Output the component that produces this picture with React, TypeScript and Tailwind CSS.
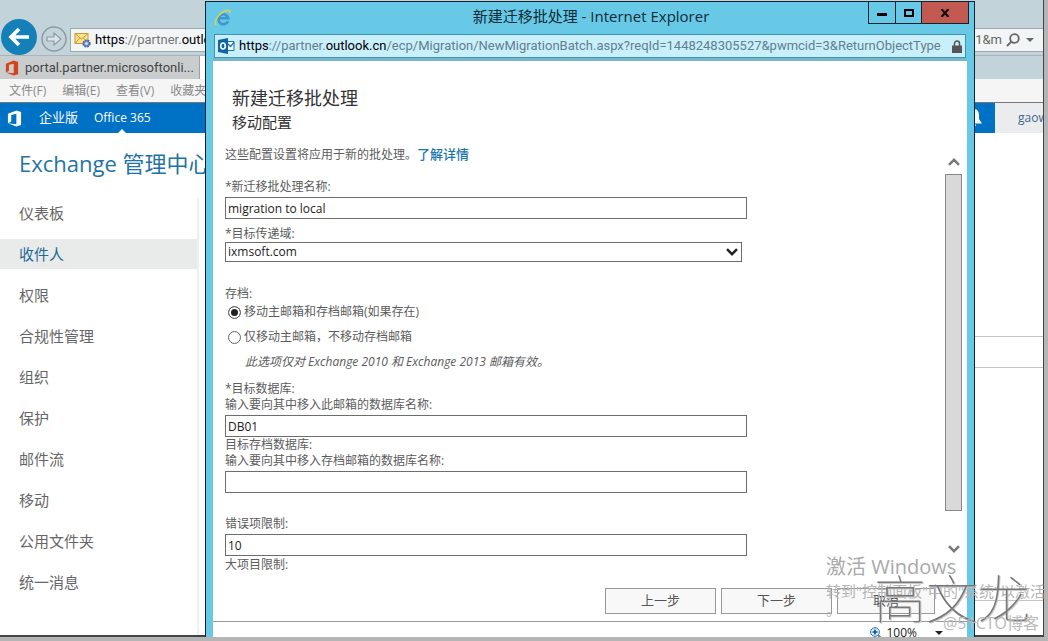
import React, { useState } from "react";
import { Lock } from "lucide-react";

const navItems = [
  "仪表板",
  "收件人",
  "权限",
  "合规性管理",
  "组织",
  "保护",
  "邮件流",
  "移动",
  "公用文件夹",
  "统一消息",
];

function OfficeLogo({ className }: { className: string }) {
  return (
    <svg viewBox="0 0 16 18" className={className} fill="currentColor" aria-hidden="true">
      <path
        fillRule="evenodd"
        d="M1 4 10 0.5 15 2v14l-5 1.5L1 14l9 1V4L4.5 5.3v7L1 14Z"
      />
    </svg>
  );
}

function MailSiteIcon() {
  return (
    <svg viewBox="0 0 17 16" className="h-4 w-[17px] shrink-0" aria-hidden="true">
      <rect x="1" y="1.5" width="13" height="10" fill="#fbe38a" stroke="#c39a35" />
      <path d="m1.500 2 6 5 6-5M1.500 11l4-5M13.500 11l-4-5" fill="none" stroke="#c39a35" />
      <circle cx="12.500" cy="11.500" r="3.200" fill="#7f9bd0" stroke="#4262a8" strokeWidth="1.800" strokeDasharray="1.800 .8" />
      <circle cx="12.500" cy="11.500" r="1.200" fill="#dfe8f8" />
    </svg>
  );
}

function OutlookIcon() {
  return (
    <svg viewBox="0 0 17 16" className="h-4 w-[17px] shrink-0" aria-hidden="true">
      <path d="M9 3.500h7v9H9" fill="#f4fbff" stroke="#1b6fae" />
      <path d="m9 5 3.500 3.500L16 4.500" fill="none" stroke="#1b6fae" strokeWidth="1.200" />
      <path d="M0 2 10 0v16L0 14Z" fill="#0f64a5" />
      <ellipse cx="5" cy="8" rx="2.300" ry="3" fill="none" stroke="#fff" strokeWidth="1.600" />
    </svg>
  );
}

function ExplorerIcon() {
  return (
    <svg viewBox="0 0 18 18" className="h-[18px] w-[18px]" aria-hidden="true">
      <path
        d="M14 12.200A5 5 0 1 1 14.300 9.300H5.500"
        fill="none"
        stroke="#3f97cc"
        strokeWidth="2.600"
      />
      <path
        d="M2.500 15.800C-.5 14 3 6.500 9 3c4-2.300 7.500-2.500 7 1"
        fill="none"
        stroke="#e3cf57"
        strokeWidth="1.600"
      />
    </svg>
  );
}

function Chevron({ className }: { className: string }) {
  return (
    <svg viewBox="0 0 12 8" className={className} fill="none" stroke="currentColor" strokeWidth="2.400" aria-hidden="true">
      <path d="m1 1.200 5 5 5-5" />
    </svg>
  );
}

function BrowserChrome() {
  return (
    <header>
      <div className="flex h-[55px] items-end bg-[#c2d4da] pb-[3px]">
        <button aria-label="后退" className="-mb-[3px] ml-px h-[36px] w-[36px] shrink-0">
          <svg viewBox="0 0 36 36" className="h-full w-full">
            <circle cx="18" cy="18" r="18" fill="#1580b8" />
            <path d="M28 18H10m8-8-8 8 8 8" fill="none" stroke="#fff" strokeWidth="3.600" />
          </svg>
        </button>
        <button aria-label="前进" className="ml-1 h-[26px] w-[26px] shrink-0">
          <svg viewBox="0 0 26 26" className="h-full w-full" fill="none" stroke="#8d9ba1">
            <circle cx="13" cy="13" r="12" strokeWidth="1.500" />
            <path d="M6 11h7V7l7 6-7 6v-4H6Z" fill="#dbe5e9" strokeWidth="1.200" />
          </svg>
        </button>
        <div className="ml-[3px] flex h-6 min-w-0 flex-1 items-center border border-r-0 border-[#9ba9af] bg-[#f1f5f6] pl-[3px] font-[Roboto]">
          <MailSiteIcon />
          <span className="ml-1 min-w-0 flex-1 truncate text-[13px] text-[#777]">
            <span className="text-black">https</span>://partner.<span className="text-black">outlook.cn</span>/ecp/
          </span>
          <span className="text-[13px] text-[#666]">=1&amp;m</span>
          <button aria-label="搜索" className="ml-1 flex shrink-0 items-center gap-1.5 pr-[9px]">
            <svg viewBox="0 0 14 14" className="h-[14px] w-[14px]" fill="none" stroke="#666" strokeWidth="1.800">
              <circle cx="8.500" cy="5.500" r="4.300" />
              <path d="M5.500 8.500 1 13" />
            </svg>
            <svg viewBox="0 0 8 4" className="h-1 w-2" fill="#666">
              <path d="M0 0h8L4 4Z" />
            </svg>
          </button>
        </div>
      </div>
      <div className="flex h-6 border-t border-[#a9b5ba] bg-[#c2d4da]">
        <button className="flex w-[200px] items-center gap-[6px] border-r border-[#9aa5aa] bg-[#cacdce] pl-[5px] text-[13px] text-[#444]">
          <OfficeLogo className="h-4 w-[14px] shrink-0 text-[#d5421c]" />
          <span className="whitespace-nowrap font-[Roboto]">portal.partner.microsoftonli...</span>
        </button>
        <div className="w-10 bg-white" />
      </div>
      <nav className="flex h-6 items-center gap-4 border-b border-[#777] bg-[#f5f5f5] pl-[9px] text-xs text-[#8a8a8a]">
        <button>文件(F)</button>
        <button>编辑(E)</button>
        <button>查看(V)</button>
        <button>收藏夹(A)</button>
      </nav>
    </header>
  );
}

function SuiteBar() {
  return (
    <div className="flex h-[30px] bg-[#0072c6] text-[13px] text-white">
      <div className="flex flex-1 items-center">
        <OfficeLogo className="ml-[7px] h-[17px] w-[15px]" />
        <a href="#enterprise" className="ml-[17px]">企业版</a>
        <a href="#office" className="relative ml-4 text-xs leading-[30px]">
          Office 365
          <svg viewBox="0 0 8 4" className="absolute bottom-0 left-1/2 h-1 w-2 -translate-x-1/2" fill="#fff">
            <path d="M0 4 4 0l4 4Z" />
          </svg>
        </a>
        <svg viewBox="0 0 18 18" className="ml-auto mr-3 h-[18px] w-[18px]" fill="#fff" aria-hidden="true">
          <path d="M9 0c3.500 0 5 3 5 6v4l3 4.500H1L4 10V6c0-3 1.500-6 5-6Zm-2 15.500h4a2 2 0 0 1-4 0Z" />
        </svg>
      </div>
      <a href="#user" className="w-12 overflow-hidden bg-[#ebecee] pl-[23px] text-xs leading-[30px] text-[#3c6a8e]">
        gaow
      </a>
    </div>
  );
}

function AdminPage() {
  return (
    <div className="flex flex-1 flex-col bg-white">
      <SuiteBar />
      <a href="#eac" className="pl-[19px] pt-3 text-[22px] leading-9 text-[#1f74a3]">Exchange 管理中心</a>
      <div className="mt-[17px] flex flex-1">
        <nav className="flex w-[199px] shrink-0 flex-col gap-[11px] border-r-2 border-[#efefef]">
          {navItems.map((item) => (
            <a
              key={item}
              href={"#" + item}
              className={
                item === "收件人"
                  ? "bg-[#e9eaea] pl-[19px] text-[15px] leading-[30px] text-[#1f6b98]"
                  : "pl-[19px] text-[15px] leading-[30px] text-[#666]"
              }
            >
              {item}
            </a>
          ))}
        </nav>
        <main className="ml-4 flex-1 pt-[138px]">
          <div className="h-8 border-y border-[#c4c4c4]" />
          <div className="h-[233px] border-b border-[#c4c4c4]" />
        </main>
      </div>
    </div>
  );
}

const fieldClass =
  "block h-[22px] w-[522px] max-w-full border border-[#6d6d6d] bg-white px-[2px] text-xs text-[#222] outline-none";

function MigrationForm() {
  const [archive, setArchive] = useState("both");
  return (
    <form id="migration" className="flex-1 pl-3 text-xs leading-4 text-[#5c5c5c]">
      <p className="leading-5">
        这些配置设置将应用于新的批处理。
        <a href="#learn" className="text-[13px] font-medium text-[#1a76ad]">了解详情</a>
      </p>
      <label htmlFor="name" className="mb-[2px] mt-[14px] block">*新迁移批处理名称:</label>
      <input id="name" className={fieldClass} defaultValue="migration to local" />
      <label htmlFor="domain" className="mt-[7px] block">*目标传递域:</label>
      <div className="relative w-[517px] max-w-full">
        <select
          id="domain"
          className="block h-5 w-full appearance-none border border-[#6d6d6d] bg-white px-[2px] text-xs leading-4 text-[#222]"
        >
          <option>ixmsoft.com</option>
        </select>
        <Chevron className="pointer-events-none absolute right-1 top-1.5 h-2 w-3 text-[#222]" />
      </div>
      <fieldset className="mt-6">
        <legend>存档:</legend>
        <label className="flex h-5 items-center gap-[3px] pl-[3px]">
          <input
            type="radio"
            name="archive"
            checked={archive === "both"}
            onChange={() => setArchive("both")}
            className="h-[13px] w-[13px] appearance-none rounded-full border border-[#666] bg-white checked:bg-[#222] checked:shadow-[inset_0_0_0_2px_white]"
          />
          移动主邮箱和存档邮箱(如果存在)
        </label>
        <label className="mt-[5px] flex h-5 items-center gap-[3px] pl-[3px]">
          <input
            type="radio"
            name="archive"
            checked={archive === "primary"}
            onChange={() => setArchive("primary")}
            className="h-[13px] w-[13px] appearance-none rounded-full border border-[#666] bg-white checked:bg-[#222] checked:shadow-[inset_0_0_0_2px_white]"
          />
          仅移动主邮箱，不移动存档邮箱
        </label>
        <p className="mt-[7px] pl-5 italic">此选项仅对 Exchange 2010 和 Exchange 2013 邮箱有效。</p>
      </fieldset>
      <label htmlFor="db" className="mb-[2px] mt-[11px] block">
        *目标数据库:
        <br />
        输入要向其中移入此邮箱的数据库名称:
      </label>
      <input id="db" className={fieldClass} defaultValue="DB01" />
      <label htmlFor="archive-db" className="mb-[2px] block">
        目标存档数据库:
        <br />
        输入要向其中移入存档邮箱的数据库名称:
      </label>
      <input id="archive-db" className={fieldClass} />
      <label htmlFor="bad" className="mb-[2px] mt-[23px] block">错误项限制:</label>
      <input id="bad" className={fieldClass} defaultValue="10" />
      <p className="pt-px">大项目限制:</p>
    </form>
  );
}

function Dialog() {
  return (
    <section className="absolute bottom-1 left-[205px] right-[73px] top-px flex flex-col overflow-hidden border border-b-0 border-[#123] bg-[#67c9e6]">
      <header className="relative flex h-8 shrink-0 items-center pl-2">
        <ExplorerIcon />
        <h2 className="flex-1 pb-1 pr-6 text-center text-[15px] leading-6 text-[#0f2c38]">
          新建迁移批处理 - Internet Explorer
        </h2>
        <div className="absolute -top-px right-[5px] flex h-[23px] divide-x divide-[#123] border border-[#123]">
          <button aria-label="最小化" className="flex w-[27px] items-center justify-center">
            <span className="mt-1 h-[3px] w-[10px] bg-black" />
          </button>
          <button aria-label="最大化" className="flex w-[26px] items-center justify-center">
            <span className="h-2 w-[10px] border-2 border-black" />
          </button>
          <button aria-label="关闭" className="flex w-[46px] items-center justify-center bg-[#c35a52]">
            <svg viewBox="0 0 10 8" className="h-2 w-[10px]" stroke="#111" strokeWidth="2.200">
              <path d="m1.500 0 7 8M8.500 0l-7 8" />
            </svg>
          </button>
        </div>
      </header>
      <div className="mx-2 flex h-6 shrink-0 items-center border border-[#3f93b4] bg-[#c9effb] pl-[3px] pr-[2px]">
        <OutlookIcon />
        <span className="ml-1 min-w-0 flex-1 overflow-hidden whitespace-nowrap font-[Roboto] text-[13px] text-[#5f808c]">
          <span className="text-black">https</span>://partner.<span className="text-black">outlook.cn</span>
          /ecp/Migration/NewMigrationBatch.aspx?reqId=1448248305527&amp;pwmcid=3&amp;ReturnObjectType
        </span>
        <svg viewBox="0 0 10 13" className="ml-1.5 mr-px h-[13px] w-[10px] shrink-0" aria-hidden="true">
          <path d="M2.500 6V3.500a2.500 2.500 0 0 1 5 0V6" fill="none" stroke="#555" strokeWidth="1.500" />
          <path d="M0 5.500h10V13H0Z" fill="#555" />
        </svg>
      </div>
      <div className="mx-[7px] flex min-h-0 flex-1 flex-col border-t-[3px] border-[#79b6ca] bg-white">
        <div className="mb-[9px] pl-[19px] pt-[25px] text-[#333]">
          <h1 className="text-lg leading-6">新建迁移批处理</h1>
          <h2 className="text-[15px] leading-[25px]">移动配置</h2>
        </div>
        <div className="flex">
          <MigrationForm />
          <div className="mr-[5px] mt-[14px] flex w-[17px] flex-col items-center text-[#777]">
            <Chevron className="h-2 w-3 rotate-180" />
            <div className="mt-2 h-[337px] w-full border border-[#888] bg-[#d9d9d9]" />
            <Chevron className="mb-5 mt-auto h-2 w-3" />
          </div>
        </div>
        <footer className="mt-auto">
          <div className="mb-[7px] flex gap-[5px] pl-[392px] text-[13px] text-[#555]">
            <button type="button" className="h-[26px] w-[111px] border border-[#999] bg-[#f8f8f8]">上一步</button>
            <button type="button" className="h-[26px] w-[111px] border border-[#999] bg-[#f8f8f8]">下一步</button>
            <button type="button" className="h-[26px] w-[98px] border border-[#999] bg-[#f8f8f8]">取消</button>
          </div>
          <div className="flex h-4 justify-end overflow-hidden border-t border-[#999] pr-6">
            <button className="mt-[3px] flex h-4 items-center text-xs leading-4 text-[#222]">
              <svg viewBox="0 0 12 12" className="mr-1 h-3 w-3" fill="none" aria-hidden="true">
                <path d="m8 8 4 4" stroke="#7a8288" strokeWidth="2" />
                <circle cx="5" cy="5" r="4.400" fill="#d7ecf9" stroke="#2f78b5" />
                <path d="M2.500 5h5M5 2.500v5" stroke="#17528c" strokeWidth="1.600" />
              </svg>
              100%
              <svg viewBox="0 0 8 4" className="ml-[18px] h-1 w-2" fill="#222">
                <path d="M0 0h8L4 4Z" />
              </svg>
            </button>
          </div>
        </footer>
      </div>
    </section>
  );
}

function Watermarks() {
  return (
    <div className="pointer-events-none absolute bottom-1 right-1 h-[84px] w-[218px] overflow-hidden whitespace-nowrap">
      <p className="absolute left-0 top-0 text-[20px] leading-7 text-[#a9a9a9]">激活 Windows</p>
      <p className="absolute left-0 top-[28px] text-[15px] leading-5 text-[#b4b4b4]">转到"控制面板"中的"系统"以激活</p>
      <p className="absolute left-0 top-[46px] text-[15px] leading-5 text-[#b4b4b4]">。</p>
      <p className="absolute left-[48px] top-[18px] text-[52px] font-thin leading-[56px] text-[#777] [text-shadow:1px_1px_0_#ccc]">
        高文龙
      </p>
      <p className="absolute right-[5px] top-[60px] text-base leading-5 text-[#b9b9b9]">@51CTO博客</p>
    </div>
  );
}

export default function App() {
  return (
    <div className="relative flex min-h-screen flex-col overflow-hidden bg-[#b5b5b5] pb-1 pr-1 font-['Open_Sans','Noto_Sans_CJK_SC',sans-serif]">
      <div className="flex flex-1 flex-col border-b-2 border-r border-[#444] bg-white">
        <BrowserChrome />
        <AdminPage />
      </div>
      <Dialog />
      <Watermarks />
    </div>
  );
}
